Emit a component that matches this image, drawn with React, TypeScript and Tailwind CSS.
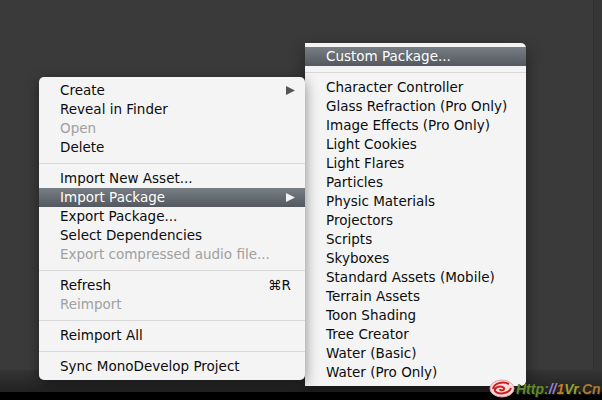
const leftMenu = [
  [
    { label: "Create", arrow: true },
    { label: "Reveal in Finder" },
    { label: "Open", disabled: true },
    { label: "Delete" },
  ],
  [
    { label: "Import New Asset..." },
    { label: "Import Package", arrow: true, active: true },
    { label: "Export Package..." },
    { label: "Select Dependencies" },
    { label: "Export compressed audio file...", disabled: true },
  ],
  [
    { label: "Refresh", shortcut: "⌘R" },
    { label: "Reimport", disabled: true },
  ],
  [{ label: "Reimport All" }],
  [{ label: "Sync MonoDevelop Project" }],
];

const rightMenu = [
  [{ label: "Custom Package...", active: true }],
  [
    { label: "Character Controller" },
    { label: "Glass Refraction (Pro Only)" },
    { label: "Image Effects (Pro Only)" },
    { label: "Light Cookies" },
    { label: "Light Flares" },
    { label: "Particles" },
    { label: "Physic Materials" },
    { label: "Projectors" },
    { label: "Scripts" },
    { label: "Skyboxes" },
    { label: "Standard Assets (Mobile)" },
    { label: "Terrain Assets" },
    { label: "Toon Shading" },
    { label: "Tree Creator" },
    { label: "Water (Basic)" },
    { label: "Water (Pro Only)" },
  ],
];

type Item = {
  label: string;
  arrow?: boolean;
  active?: boolean;
  disabled?: boolean;
  shortcut?: string;
};

const MenuRow = ({ item }: { item: Item }) => {
  const color = item.active
    ? "bg-gradient-to-b from-[#777e84] to-[#53595f] text-white"
    : item.disabled
      ? "text-[#a0a0a0]"
      : "text-[#0c0c0c]";

  return (
    <div className={`flex h-[19px] items-center justify-between leading-[19px] ${color}`}>
      <span className="pl-[21px]">{item.label}</span>
      {item.arrow && (
        <svg width="11" height="11" viewBox="0 0 11 11" className="mr-[9px]">
          <path d="M1 1 L10 5.5 L1 10 Z" fill={item.active ? "#f2f2f2" : "#555555"} />
        </svg>
      )}
      {item.shortcut && <span className="pr-[14px]">{item.shortcut}</span>}
    </div>
  );
};

const Menu = ({ groups }: { groups: Item[][] }) => (
  <>
    {groups.map((group, i) => (
      <div key={i}>
        {i > 0 && (
          <div className="flex h-3 items-center">
            <div className="h-px w-full bg-[#d9d9d9]" />
          </div>
        )}
        {group.map((item) => (
          <MenuRow key={item.label} item={item} />
        ))}
      </div>
    ))}
  </>
);

export default function App() {
  return (
    <div className="relative flex h-[400px] w-[602px] flex-col overflow-hidden bg-black font-['DejaVu_Sans',sans-serif] text-[13.5px]">
      <div className="flex h-[370px]">
        <div className="flex-1 bg-[#3a3a3a]" />
        <div className="w-[9px] border-l border-[#303030] bg-[#363636]" />
      </div>
      <div className="h-[22px] bg-gradient-to-b from-[#343434] to-[#222222]" />

      {/* Submenu */}
      <div className="absolute left-[305px] top-[43px] h-[343px] w-[221px] rounded-r-[5px] bg-[#f4f4f4] pt-1 shadow-[0_6px_16px_rgba(0,0,0,0.45)]">
        <Menu groups={rightMenu} />
      </div>

      {/* Context menu */}
      <div className="absolute left-[39px] top-[77px] h-[303px] w-[266px] rounded-[5px] bg-[#f4f4f4] pt-1 shadow-[0_4px_14px_rgba(0,0,0,0.45)]">
        <Menu groups={leftMenu} />
      </div>

      {/* Watermark */}
      <div className="absolute left-[489px] top-[379px] flex items-center gap-[1px]">
        <svg width="26" height="19" viewBox="0 0 26 19">
          <ellipse cx="13" cy="9.5" rx="12" ry="8.5" fill="#f6d9d9" stroke="#e0a0b0" />
          <path d="M4 10 C5 4 14 2 20 5 M22 9 C20 15 9 16 6 12 C5 8 12 6 15 9 C16 12 11 12 11 10" fill="none" stroke="#c8201f" strokeWidth="2" />
        </svg>
        <span className="whitespace-nowrap font-['Liberation_Sans',sans-serif] text-[14px] font-bold italic leading-none text-[#5f8a2a] [text-shadow:1px_1px_0_#222]">
          Http:<span className="text-[#9a7fd0]">//</span>
          <span className="text-[#d07a20]">1</span>
          <span className="text-[#9aa030]">Vr</span>
          <span className="text-[#a87838]">.Cn</span>
        </span>
      </div>
    </div>
  );
}
